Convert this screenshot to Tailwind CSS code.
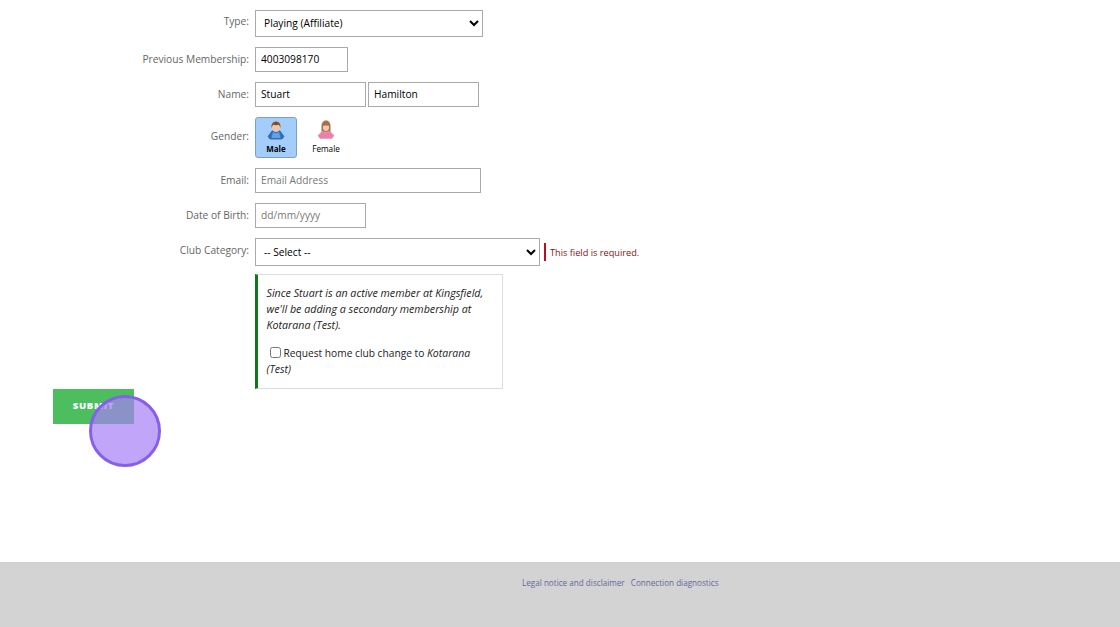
<!DOCTYPE html>
<html lang="en">

<head>
    <meta charset="UTF-8">
    <title>Membership</title>
    <script src="https://cdn.jsdelivr.net/npm/@tailwindcss/browser@4"></script>
</head>

<body class="relative bg-white h-[627px] overflow-hidden font-['Open_Sans',sans-serif] text-[10.2px] text-[#222]">
    <main class="h-[562px] pt-[10px]">
        <form class="flex flex-col">
            <div class="flex items-start h-[27px] mb-[10px]">
                <label class="w-[249px] mr-[6px] text-right text-[#666] leading-[22px]">Type:</label>
                <select class="w-[228px] h-[27px] pl-[4px] pb-[1px] bg-white border border-[#aaa] text-[10.2px] text-black">
                    <option>Playing (Affiliate)</option>
                </select>
            </div>
            <div class="flex items-center h-[25px] mb-[10px]">
                <label class="w-[249px] mr-[6px] text-right text-[#666]">Previous Membership:</label>
                <input type="text" value="4003098170" class="w-[93px] h-[25px] px-[5px] pb-[1px] border border-[#aaa] text-black">
            </div>
            <div class="flex items-center h-[25px] mb-[10px]">
                <label class="w-[249px] mr-[6px] text-right text-[#666]">Name:</label>
                <input type="text" value="Stuart" class="w-[111px] h-[25px] px-[5px] pb-[1px] mr-[2px] border border-[#aaa] text-black">
                <input type="text" value="Hamilton" class="w-[111px] h-[25px] px-[5px] pb-[1px] border border-[#aaa] text-black">
            </div>
            <div class="flex items-center h-[41px] mb-[10px]">
                <label class="w-[249px] mr-[6px] pb-[2px] text-right text-[#666]">Gender:</label>
                <div class="flex gap-[8px]">
                    <div class="w-[42px] h-[41px] flex flex-col items-center pt-[3px] bg-[#a3cdfb] border border-[#7d9fc4] rounded-[3px]">
                        <svg width="20" height="20" viewBox="0 0 20 20">
                            <path d="M6 10 2 15.500 4 18h12l2-2.500L14 10z" fill="#2f6fc4" stroke="#3a5f8f" stroke-width=".8" stroke-linejoin="round" />
                            <path d="M7 11c2 1.500 4 1.500 6 0l1.500 6h-9z" fill="#5da2ec" />
                            <path d="M6 3.500C6 1.500 8 .5 10 .5s4 1 4 3v3c0 2.500-2 4.500-4 4.500s-4-2-4-4.500z" fill="#f0c6a6" />
                            <path d="M5.500 7C5 2.500 7.500.5 10 .5s5 2 4.500 6.500c-.5-2-1.500-3-2-3.200-1.500.6-3.500.6-5 0C7 4 6 5 5.500 7z" fill="#7b5233" />
                        </svg>
                        <span class="text-[8px] font-bold leading-[12px] mt-[2px] text-black">Male</span>
                    </div>
                    <div class="w-[42px] h-[41px] flex flex-col items-center pt-[3px]">
                        <svg width="20" height="20" viewBox="0 0 20 20">
                            <path d="M5.500 6c0-3.500 2-5.500 4.500-5.500s4.500 2 4.500 5.500v6h-9z" fill="#a5714e" />
                            <path d="M6.500 11 2 15.500 4 18.500h12l2-3-4.500-4.500c-2 1.500-5 1.500-7 0z" fill="#ee7fab" stroke="#d0a0a8" stroke-width=".6" stroke-linejoin="round" />
                            <path d="M7 5.500h6V8c0 1.800-1.400 3-3 3S7 9.800 7 8z" fill="#f3c8ab" />
                            <path d="M7 6c.5-1.500 1.500-2.500 3-2.500S12.500 4.500 13 6c-1-.7-2-1-3-1s-2 .3-3 1z" fill="#a5714e" />
                        </svg>
                        <span class="text-[8.2px] leading-[12px] mt-[3px] text-black">Female</span>
                    </div>
                </div>
            </div>
            <div class="flex items-center h-[25px] mb-[10px]">
                <label class="w-[249px] mr-[6px] text-right text-[#666]">Email:</label>
                <input type="text" placeholder="Email Address" class="w-[226px] h-[25px] px-[5px] pb-[1px] border border-[#aaa] placeholder:text-[#777]">
            </div>
            <div class="flex items-center h-[25px] mb-[10px]">
                <label class="w-[249px] mr-[6px] text-right text-[#666]">Date of Birth:</label>
                <input type="text" placeholder="dd/mm/yyyy" class="w-[111px] h-[25px] px-[5px] pb-[1px] border border-[#aaa] placeholder:text-[#777]">
            </div>
            <div class="flex items-start h-[28px] mb-[8px]">
                <label class="w-[249px] mr-[6px] text-right text-[#666] leading-[24px]">Club Category:</label>
                <select class="w-[285px] h-[28px] pl-[4px] bg-white border border-[#aaa] text-[10.2px] text-black">
                    <option>-- Select --</option>
                </select>
                <span class="ml-[4px] mt-[5px] pl-[4px] h-[18px] border-l-[2px] border-[#b5121b] text-[9.2px] leading-[20px] text-[#801515]">This field is required.</span>
            </div>
            <div class="ml-[255px] w-[248px] h-[115px] pl-[8.500px] pr-[12px] pt-[10px] bg-white border border-[#ddd] border-l-[3px] border-l-[#0d7a1a] leading-[16px] text-[#222]">
                <p class="italic text-[10.7px]">Since Stuart is an active member at Kingsfield, we'll be adding a secondary membership at Kotarana (Test).</p>
                <p class="mt-[12px]"><input type="checkbox" class="w-[11px] h-[11px] ml-[3px] mr-[3px] align-[-1px]">Request home club change to <em class="text-[10.5px]">Kotarana (Test)</em></p>
            </div>
            <button type="button" class="ml-[53px] w-[81px] h-[35px] bg-[#4cbe5e] text-white text-[9.500px] font-extrabold tracking-[0.7px]">SUBMIT</button>
        </form>
    </main>

    <footer class="h-[65px] bg-[#d3d3d3] pt-[15px] pl-[522px] text-[8.150px] leading-[12px] text-[#67679a]">
        <a class="mr-[4px]">Legal notice and disclaimer</a>
        <a>Connection diagnostics</a>
    </footer>

    <!-- click marker -->
    <div class="absolute left-[89px] top-[395px] w-[72px] h-[72px] rounded-full bg-[#a67ff5]/70 border-[3px] border-[#8660e8]"></div>
</body>

</html>
